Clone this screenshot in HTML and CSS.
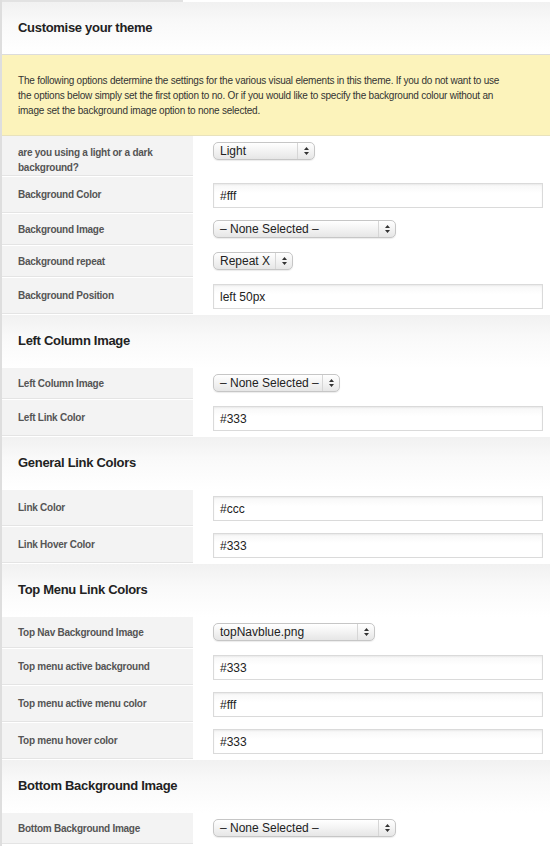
FILE: index.html
```html
<!DOCTYPE html>
<html>
<head>
<meta charset="utf-8">
<link rel="stylesheet" href="styles.css">
</head>
<body>
<div class="panel">
  <div class="tail"></div>

  <div class="section first"><h2>Customise your theme</h2></div>
  <div class="notice">The following options determine the settings for the various visual elements in this theme. If you do not want to use the options below simply set the first option to no. Or if you would like to specify the background colour without an image set the background image option to none selected.</div>

  <div class="row tall sel"><div class="label">are you using a light or a dark background?</div><div class="field"><span class="select w-light"><span class="val">Light</span><span class="arrows"><svg width="5" height="8" viewBox="0 0 5 8"><path d="M2.5 0 L5 3 L0 3 Z M2.5 8 L5 5 L0 5 Z" fill="#333"/></svg></span></span></div></div>
  <div class="row inp"><div class="label">Background Color</div><div class="field"><span class="input">#fff</span></div></div>
  <div class="row sel"><div class="label">Background Image</div><div class="field"><span class="select w-none"><span class="val">– None Selected –</span><span class="arrows"><svg width="5" height="8" viewBox="0 0 5 8"><path d="M2.5 0 L5 3 L0 3 Z M2.5 8 L5 5 L0 5 Z" fill="#333"/></svg></span></span></div></div>
  <div class="row sel"><div class="label">Background repeat</div><div class="field"><span class="select w-repeat"><span class="val">Repeat X</span><span class="arrows"><svg width="5" height="8" viewBox="0 0 5 8"><path d="M2.5 0 L5 3 L0 3 Z M2.5 8 L5 5 L0 5 Z" fill="#333"/></svg></span></span></div></div>
  <div class="row inp"><div class="label">Background Position</div><div class="field"><span class="input">left 50px</span></div></div>

  <div class="section"><h2>Left Column Image</h2></div>
  <div class="row sel"><div class="label">Left Column Image</div><div class="field"><span class="select w-left"><span class="val">– None Selected –</span><span class="arrows"><svg width="5" height="8" viewBox="0 0 5 8"><path d="M2.5 0 L5 3 L0 3 Z M2.5 8 L5 5 L0 5 Z" fill="#333"/></svg></span></span></div></div>
  <div class="row inp"><div class="label">Left Link Color</div><div class="field"><span class="input">#333</span></div></div>

  <div class="section"><h2>General Link Colors</h2></div>
  <div class="row inp"><div class="label">Link Color</div><div class="field"><span class="input">#ccc</span></div></div>
  <div class="row inp"><div class="label">Link Hover Color</div><div class="field"><span class="input">#333</span></div></div>

  <div class="section"><h2>Top Menu Link Colors</h2></div>
  <div class="row sel"><div class="label">Top Nav Background Image</div><div class="field"><span class="select w-nav"><span class="val">topNavblue.png</span><span class="arrows"><svg width="5" height="8" viewBox="0 0 5 8"><path d="M2.5 0 L5 3 L0 3 Z M2.5 8 L5 5 L0 5 Z" fill="#333"/></svg></span></span></div></div>
  <div class="row inp"><div class="label">Top menu active background</div><div class="field"><span class="input">#333</span></div></div>
  <div class="row inp"><div class="label">Top menu active menu color</div><div class="field"><span class="input">#fff</span></div></div>
  <div class="row inp"><div class="label">Top menu hover color</div><div class="field"><span class="input">#333</span></div></div>

  <div class="section"><h2>Bottom Background Image</h2></div>
  <div class="row sel"><div class="label">Bottom Background Image</div><div class="field"><span class="select w-none"><span class="val">– None Selected –</span><span class="arrows"><svg width="5" height="8" viewBox="0 0 5 8"><path d="M2.5 0 L5 3 L0 3 Z M2.5 8 L5 5 L0 5 Z" fill="#333"/></svg></span></span></div></div>
</div>
</body>
</html>
```

FILE: styles.css
```css
html, body {
  margin: 0;
  padding: 0;
  background: #fff;
}
body {
  font-family: "Liberation Sans", Arial, sans-serif;
  color: #333;
  height: 846px;
  overflow: hidden;
}
.panel {
  border-left: 2px solid #dedede;
  width: 548px;
  min-height: 846px;
}
.tail {
  width: 181px;
  height: 2px;
  background: #e2e2e2;
}
.section {
  box-sizing: border-box;
  height: 53px;
  padding: 18px 0 0 16px;
  background: linear-gradient(to bottom, #f1f1f1 0%, #f9f9f9 40%, #ffffff 100%);
}
.section.first {
  border-bottom: 1px solid #dcdcdc;
}
.section h2 {
  margin: 0;
  font-size: 13px;
  line-height: 16px;
  letter-spacing: -0.3px;
  font-weight: bold;
  color: #222;
}
.notice {
  background: #fcf3bb;
  border-bottom: 1px solid #e8e2bc;
  padding: 18px 40px 17px 16px;
  font-size: 10px;
  letter-spacing: -0.22px;
  line-height: 15px;
  color: #333;
  height: 45px;
}
.row {
  display: grid;
  grid-template-columns: 191px 1fr;
}
.row.inp { height: 37px; }
.row.sel { height: 32px; }
.row.tall { height: 41px; }
.label {
  background: #f3f3f3;
  border-bottom: 1px solid #e4e4e4;
  margin-bottom: 1px;
  padding: 0 16px;
  display: flex;
  align-items: center;
  font-size: 10px;
  letter-spacing: -0.25px;
  font-weight: bold;
  color: #555;
  line-height: 15px;
}
.row.tall .label {
  align-items: flex-start;
  padding-top: 9px;
}
.field {
  padding-left: 20px;
  padding-right: 6px;
}
.row.inp .field { padding-top: 6px; }
.row.sel .field { padding-top: 6px; }
.input {
  display: flex;
  align-items: center;
  box-sizing: border-box;
  height: 25px;
  width: 330px;
  border: 1px solid #dadada;
  box-shadow: inset 0 1px 2px rgba(0,0,0,0.06);
  background: linear-gradient(to bottom, #f7f7f7, #fff 40%);
  padding-left: 6px;
  font-size: 12px;
  color: #222;
}
.select {
  display: flex;
  align-items: center;
  box-sizing: border-box;
  height: 18px;
  border: 1px solid #c6c6c6;
  border-radius: 5px;
  background: linear-gradient(to bottom, #ffffff 0%, #f3f3f3 50%, #e6e6e6 100%);
  box-shadow: 0 1px 1px rgba(0,0,0,0.08);
  font-size: 12px;
  color: #222;
}
.select .val {
  flex: 1;
  padding-left: 6px;
  white-space: nowrap;
}
.select .arrows {
  width: 16px;
  height: 16px;
  border-left: 1px solid #d6d6d6;
  display: flex;
  align-items: center;
  justify-content: center;
}
.w-light { width: 102px; }
.w-none { width: 183px; }
.w-repeat { width: 80px; }
.w-left { width: 127px; }
.w-nav { width: 162px; }
```
